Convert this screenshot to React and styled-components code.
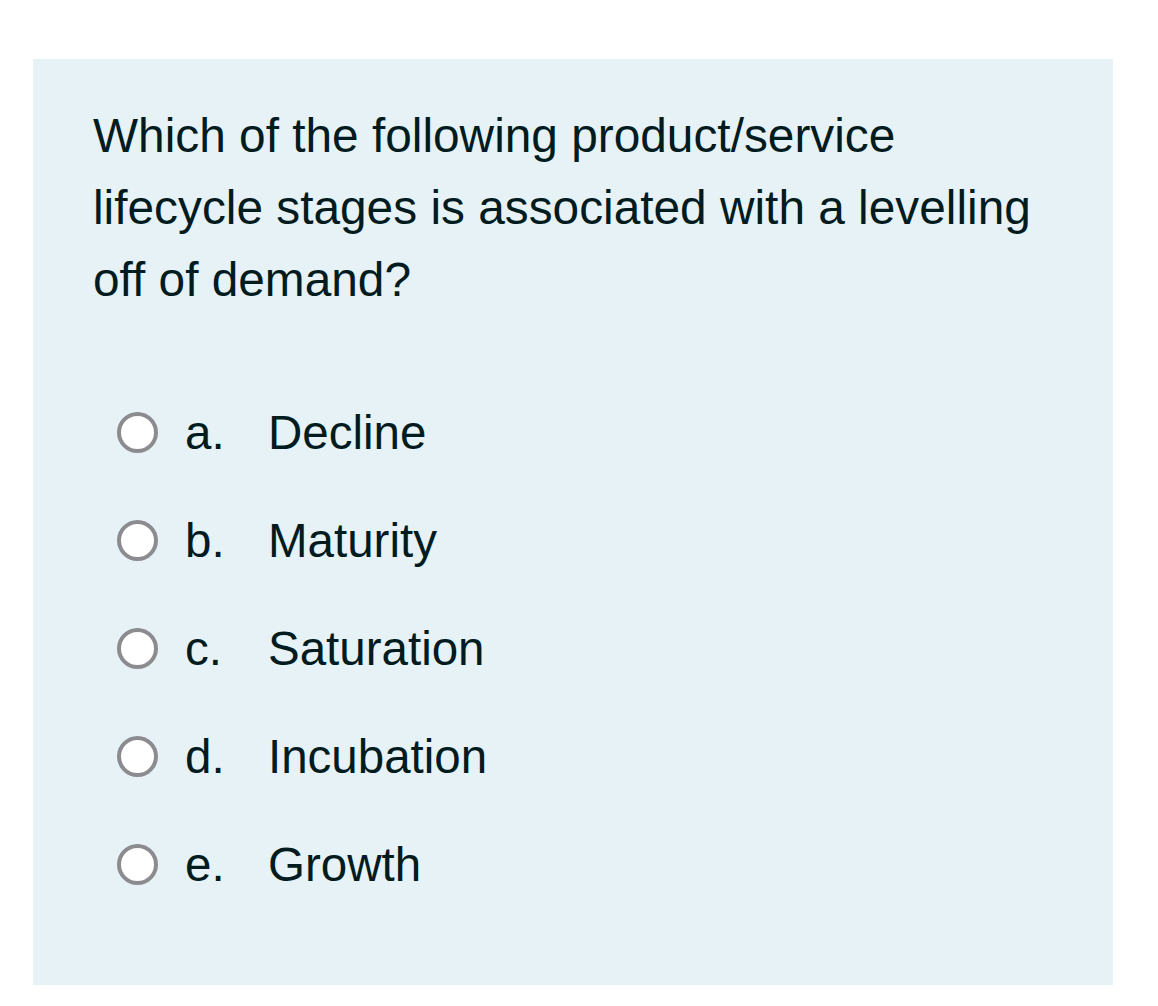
import React from "react";
import styled, { createGlobalStyle } from "styled-components";

const GlobalStyle = createGlobalStyle`
  body {
    margin: 0;
    background: #ffffff;
    font-family: "Liberation Sans", Arial, sans-serif;
  }
`;

const options = [
  { key: "a", label: "Decline" },
  { key: "b", label: "Maturity" },
  { key: "c", label: "Saturation" },
  { key: "d", label: "Incubation" },
  { key: "e", label: "Growth" },
];

export default function App() {
  return (
    <Page>
      <GlobalStyle />
      <Card>
        <Question>
          Which of the following product/service lifecycle stages is associated
          with a levelling off of demand?
        </Question>
        <OptionList>
          {options.map((o) => (
            <Option key={o.key}>
              <Radio type="radio" name="answer" value={o.key} />
              <Letter>{o.key}.</Letter>
              <Label>{o.label}</Label>
            </Option>
          ))}
        </OptionList>
      </Card>
    </Page>
  );
}

const Page = styled.div`
  padding: 59px 45px 21px 33px;
`;

const Card = styled.div`
  width: 1080px;
  box-sizing: border-box;
  background: #e6f2f5;
  padding: 41px 60px 67px 60px;
  color: #011b1f;
`;

const Question = styled.p`
  margin: 0;
  font-size: 47.8px;
  line-height: 72px;
`;

const OptionList = styled.div`
  margin-top: 62px;
  display: flex;
  flex-direction: column;
`;

const Option = styled.label`
  display: flex;
  align-items: center;
  height: 108px;
  padding-left: 24px;
  font-size: 47.5px;
`;

const Radio = styled.input`
  appearance: none;
  margin: 0;
  width: 41px;
  height: 41px;
  box-sizing: border-box;
  border: 4px solid #8c8c90;
  border-radius: 50%;
  background: #ffffff;
  flex-shrink: 0;
`;

const Letter = styled.span`
  width: 83px;
  margin-left: 27px;
`;

const Label = styled.span``;
